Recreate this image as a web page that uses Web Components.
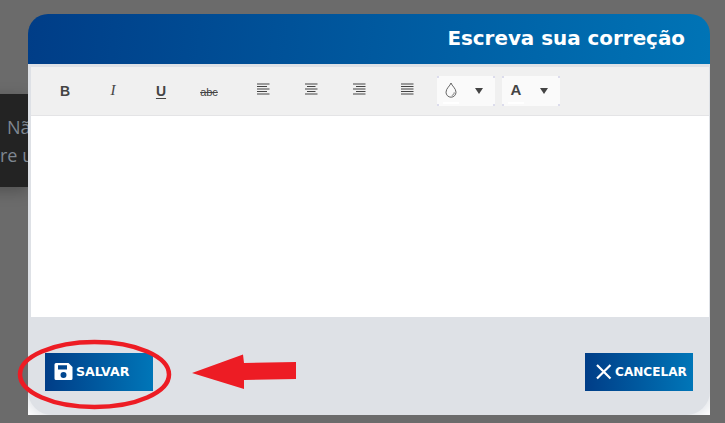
<!DOCTYPE html>
<html lang="pt"><head><meta charset="utf-8"><title>Escreva sua correção</title>
<style>
html,body{margin:0;padding:0;width:725px;height:423px;overflow:hidden;background:#6b6b6b}
body{font-family:"DejaVu Sans",sans-serif;position:relative}
</style></head><body>
<backdrop-toast><span>Não</span><span>re um</span></backdrop-toast>
<correction-modal>
  <span slot="title">Escreva sua correção</span>
  <editor-toolbar slot="toolbar"></editor-toolbar>
  <action-button slot="left" icon="save">SALVAR</action-button>
  <action-button slot="right" icon="close">CANCELAR</action-button>
</correction-modal>
<annotation-marks></annotation-marks>
<script>
function el(name,css,html){
  customElements.define(name,class extends HTMLElement{
    constructor(){super();this.attachShadow({mode:'open'}).innerHTML='<style>'+css+'</style>'+(typeof html==='function'?html(this):html);}
  });
}
el('backdrop-toast',`
  :host{position:absolute;left:-40px;top:94px;width:68px;height:93px;background:#232323;box-shadow:0 4px 14px rgba(0,0,0,.25);
    box-sizing:border-box;padding:19px 0 0 47px;display:flex;flex-direction:column;font:18px/28px "Open Sans",sans-serif;color:#7f8791;overflow:hidden;white-space:nowrap}
  ::slotted(span:nth-child(2)){margin-left:-7px}
`,'<slot></slot>');

el('correction-modal',`
  :host{display:flex;flex-direction:column;position:absolute;left:28px;top:14px;width:682px;height:401px}
  header{height:50px;flex:none;border-radius:20px 20px 0 0;background:linear-gradient(96deg,#003d87,#0074b6);
    display:flex;align-items:center;justify-content:flex-end;padding:0 25px 1px 0;box-sizing:border-box;
    color:#fff;font:bold 19.900px "DejaVu Sans",sans-serif}
  .body{flex:none;background:#dee1e6;padding:3px 1px 0 3px;display:flex;flex-direction:column;height:253px;box-sizing:border-box}
  .sheet{flex:1;background:#fff}
  .foot{flex:1;background:#fff;overflow:hidden}
  footer{height:98px;box-sizing:border-box;background:#dee1e6;border-radius:0 0 24px 24px;box-shadow:0 0 14px 3px #dee1e6;display:flex;justify-content:space-between;align-items:flex-start;padding:36px 17px 0 17px}
`,`<header><slot name="title"></slot></header>
<div class="body"><slot name="toolbar"></slot><div class="sheet"></div></div>
<div class="foot"><footer><slot name="left"></slot><slot name="right"></slot></footer></div>`);

const sv=(p)=>`<svg width="16" height="16" viewBox="0 0 16 16" fill="none" stroke="#444" stroke-width="1">${p}</svg>`;
const lines=(rows)=>sv(rows.map((r,i)=>`<path d="M${r[0]} ${3+i*2.500}H${r[1]}"/>`).join(''));
el('tool-button',`
  :host{display:flex;width:48px;height:30px;align-items:center;justify-content:center;color:#444;flex:none}
  span{display:block;line-height:16px}
  :host([kind=b]) span{font:bold 14px "Liberation Sans",sans-serif}
  :host([kind=i]) span{font:italic 15px "Liberation Serif",serif}
  :host([kind=u]) span{font:bold 14px "Liberation Sans",sans-serif;text-decoration:underline;text-underline-offset:2px;text-decoration-thickness:1px}
  :host([kind=s]) span{font:11px "Liberation Sans",sans-serif;text-decoration:line-through;margin-top:3px}
`,'<span><slot></slot></span>');
el('tool-dropdown',`
  :host{display:flex;align-items:center;width:58px;height:30px;box-sizing:border-box;background:#fafafa;position:relative;padding:0 0 0 6px;flex:none;
    background-image:radial-gradient(circle,#dcdcec 0 1px,transparent 1px),radial-gradient(circle,#dcdcec 0 1px,transparent 1px),radial-gradient(circle,#dcdcec 0 1px,transparent 1px),radial-gradient(circle,#dcdcec 0 1px,transparent 1px);
    background-size:2px 2px;background-repeat:no-repeat;background-position:0 0,100% 0,0 100%,100% 100%}
  .g{width:16px;height:18px;display:flex;align-items:center;justify-content:center;font:bold 15px "Liberation Sans",sans-serif;color:#444;margin-top:-2px}
  .c{width:0;height:0;border:4px solid transparent;border-top:6px solid #444;border-bottom:0;margin-left:16px}
  .u{position:absolute;left:6px;bottom:2px;width:16px;height:2px;background:#fff}
`,`<span class="g"><slot></slot></span><span class="c"></span><span class="u"></span>`);
el('editor-toolbar',`
  :host{display:flex;align-items:center;height:49px;box-sizing:border-box;background:#f0f0f0;border-bottom:1px solid #e4e4e6;padding:0 0 1px 10px}
  .gap{width:6px;flex:none}.g2{width:6px;flex:none}.g3{width:7px;flex:none}
`,`<tool-button kind="b">B</tool-button><tool-button kind="i">I</tool-button><tool-button kind="u">U</tool-button><tool-button kind="s">abc</tool-button>
<span class="gap"></span>
<tool-button>${lines([[2,14.500],[2,12],[2,14.500],[2,12],[2,14.500]])}</tool-button>
<tool-button>${lines([[2,14.500],[4,12.500],[2,14.500],[4,12.500],[2,14.500]])}</tool-button>
<tool-button>${lines([[2,14.500],[5,14.500],[2,14.500],[5,14.500],[2,14.500]])}</tool-button>
<tool-button>${lines([[2,14.500],[2,14.500],[2,14.500],[2,14.500],[2,14.500]])}</tool-button>
<span class="g2"></span>
<tool-dropdown><svg width="12" height="16" viewBox="0 0 12 16" fill="none" stroke="#555" stroke-width=".9"><path d="M6 1C5.200 3.800 1 6.400 1 10.200a5 5 0 0 0 10 0C11 6.400 6.800 3.800 6 1Z"/><path d="M6.800 13.400c1.500-.3 2.400-1.500 2.400-3" stroke-width=".8"/></svg></tool-dropdown>
<span class="g3"></span>
<tool-dropdown>A</tool-dropdown>`);

el('action-button',`
  :host{display:block;width:108px;height:38px}
  div{height:100%;box-sizing:border-box;background:linear-gradient(90deg,#003d87,#0076b8);display:flex;align-items:center;color:#fff;font:bold 12.100px "DejaVu Sans",sans-serif;padding:0 0 1px 9px;white-space:nowrap}
  :host([icon=save]) div{font-size:12.600px}
  svg{flex:none;margin-right:3px}
  :host([icon=close]) svg{margin-right:2px}
`,h=>{
  const save=`<svg width="19" height="19" viewBox="0 0 19 19"><path fill="#fff" fill-rule="evenodd" d="M2 1H14.500L18.500 5V16.500a1.500 1.500 0 0 1-1.500 1.500H2A1.500 1.500 0 0 1 .5 16.500V2.500A1.500 1.500 0 0 1 2 1ZM4 3.200V7.500H13V3.200ZM9.500 10a3 3 0 1 0 0 6 3 3 0 0 0 0-6Z"/></svg>`;
  const x=`<svg width="19" height="19" viewBox="0 0 19 19"><path d="M3 3L16.500 16.500M16.500 3L3 16.500" stroke="#fff" stroke-width="2.200" fill="none"/></svg>`;
  return `<div>${h.getAttribute('icon')==='save'?save:x}<slot></slot></div>`;
});
el('annotation-marks',`
  :host{position:absolute;left:0;top:0;width:725px;height:423px;pointer-events:none}
  svg{display:block}
`,`<svg width="725" height="423" viewBox="0 0 725 423"><ellipse cx="94.500" cy="374.500" rx="74.500" ry="32.500" fill="none" stroke="#ed1c24" stroke-width="4.500"/><path fill="#ed1c24" d="M192 373L243 354.500L244 363L296 362L296 379L244 380L244 389Z"/></svg>`);
</script>
</body></html>
